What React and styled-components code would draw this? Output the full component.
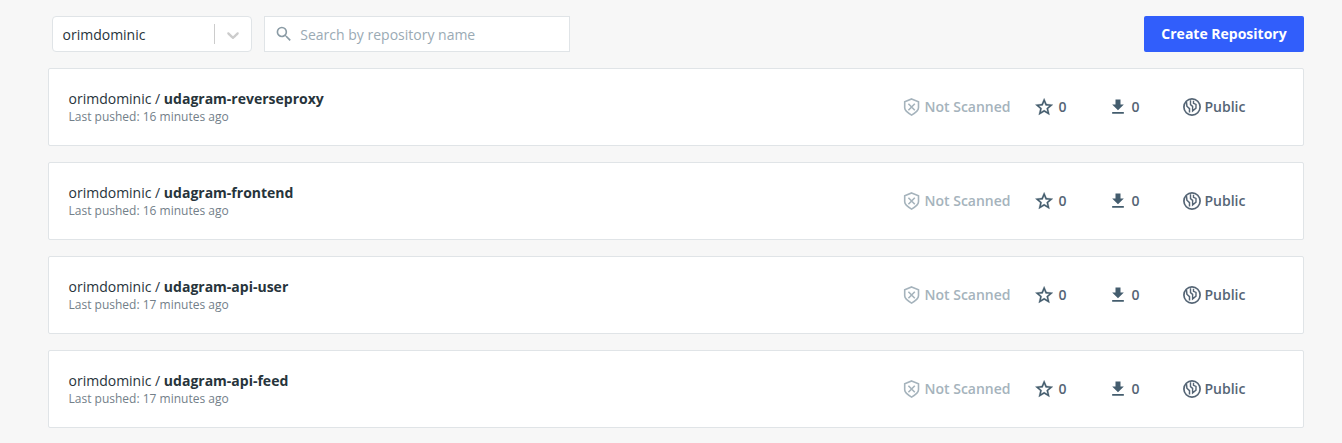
import React from "react";
import styled, { createGlobalStyle } from "styled-components";

const GlobalStyle = createGlobalStyle`
  *, *::before, *::after { box-sizing: border-box; }
  body {
    margin: 0;
    background: #f7f7f7;
    color: #27343b;
    font: 14px/20px "Open Sans", "Noto Sans", sans-serif;
  }
`;

const Page = styled.main`
  padding: 16px 38px 16px 48px;
  height: 443px;
  overflow: hidden;
`;

const Toolbar = styled.div`
  display: flex;
  width: 1256px;
  height: 36px;
  margin-bottom: 16px;
  padding-left: 4px;
`;

const AccountSelect = styled.div`
  display: flex;
  align-items: center;
  width: 200px;
  margin-right: 12px;
  padding-left: 9.5px;
  background: #fff;
  border: 1px solid #e0e4e7;
  border-radius: 4px;
`;

const SelectValue = styled.span`
  flex: 1;
  padding-top: 1px;
`;

const Separator = styled.span`
  width: 1px;
  height: 20px;
  background: #cccccc;
`;

const Chevron = styled.svg`
  width: 20px;
  height: 20px;
  margin: 2px 8px 0;
  fill: #cccccc;
`;

const SearchBox = styled.label`
  display: flex;
  align-items: center;
  width: 306px;
  padding-left: 9px;
  background: #fff;
  border: 1px solid #e0e4e7;
`;

const SearchIcon = styled.svg`
  width: 20px;
  height: 20px;
  flex: none;
  margin-right: 6.3px;
  fill: #8a9ba5;
`;

const SearchInput = styled.input`
  flex: 1;
  min-width: 0;
  height: 20px;
  padding: 1px 0 0;
  border: 0;
  outline: 0;
  background: transparent;
  font: inherit;
  color: #27343b;
  &::placeholder { color: #9aaab4; opacity: 1; }
`;

const CreateButton = styled.button`
  width: 160px;
  height: 36px;
  margin-left: auto;
  padding: 0;
  border: 0;
  border-radius: 2px;
  background: #315efb;
  color: #fff;
  font: 700 14px/20px "Open Sans", "Noto Sans", sans-serif;
`;

const RepositoryList = styled.div`
  display: flex;
  flex-direction: column;
  gap: 16px;
  width: 1256px;
`;

const RepositoryCard = styled.article`
  display: flex;
  align-items: center;
  height: 78px;
  padding-left: 19.5px;
  background: #fff;
  border: 1px solid #e0e4e7;
  border-radius: 2px;
`;

const RepositoryInfo = styled.div`
  width: 834px;
`;

const RepositoryName = styled.div`
  line-height: 20px;
  strong { font-weight: 700; }
`;

const LastPushed = styled.div`
  font-size: 12px;
  line-height: 16px;
  color: #738089;
`;

const Stat = styled.div`
  display: flex;
  align-items: center;
  width: ${({ $width }) => $width}px;
  gap: ${({ $gap }) => $gap}px;
  font-weight: 600;
  white-space: nowrap;
  color: ${({ $muted }) => ($muted ? "#a5b3bc" : "#556575")};
`;

const StatIcon = styled.svg`
  flex: none;
  width: ${({ $size }) => $size}px;
  height: ${({ $size }) => $size}px;
  fill: ${({ $line }) => ($line ? "none" : "#445d6e")};
  stroke: ${({ $line }) => ($line ? "currentColor" : "none")};
`;

const StarIcon = styled(StatIcon)`
  stroke: #445d6e;
  stroke-width: 0.3;
`;

const repositories = [
  { name: "udagram-reverseproxy", age: 16 },
  { name: "udagram-frontend", age: 16 },
  { name: "udagram-api-user", age: 17 },
  { name: "udagram-api-feed", age: 17 },
];

function Repository({ name, age }) {
  return (
    <RepositoryCard>
      <RepositoryInfo>
        <RepositoryName>orimdominic / <strong>{name}</strong></RepositoryName>
        <LastPushed>Last pushed: {age} minutes ago</LastPushed>
      </RepositoryInfo>
      <Stat $width={131} $gap={4} $muted>
        <StatIcon $size={18} $line viewBox="0.4 0 18 18" strokeWidth="1.6">
          <path d="M9 0.9 15.9 3.8V9.8C15.9 13 13 14.8 9 17.1 5 14.8 2.1 13 2.1 9.8V3.8Z" />
          <path d="m5.8 5.8 6.4 6.4m0-6.4-6.4 6.4" />
        </StatIcon>
        Not Scanned
      </Stat>
      <Stat $width={74.5} $gap={4}>
        <StarIcon $size={21} viewBox="0.4 0.5 24 24">
          <path d="m22 9.24-7.19-.62L12 2 9.19 8.63 2 9.24l5.46 4.73L5.82 21 12 17.27 18.18 21l-1.63-7.03L22 9.24zM12 15.4l-3.76 2.27 1-4.28-3.32-2.88 4.38-.38L12 6.1l1.71 4.04 4.38.38-3.32 2.88 1 4.28L12 15.4z" />
        </StarIcon>
        0
      </Stat>
      <Stat $width={73.5} $gap={3.5}>
        <StatIcon $size={20} viewBox="0 0 24 24">
          <path d="M19 9h-4V3H9v6H5l7 7 7-7zM5 18v2h14v-2H5z" />
        </StatIcon>
        0
      </Stat>
      <Stat $width={90} $gap={3}>
        <StatIcon $size={20} $line viewBox="0 0 20 20" strokeWidth="1.7">
          <circle cx="10" cy="10" r="8.1" />
          <path d="M4.4 4.6 4.9 9.2 7.5 11.6V15.4" strokeWidth="1.5" />
          <path d="M8.5 3.2V7.6L10.6 9.4V14L14 11.1V7.4L11.5 6.3V3.8" strokeWidth="1.4" />
        </StatIcon>
        Public
      </Stat>
    </RepositoryCard>
  );
}

export default function App() {
  return (
    <>
      <GlobalStyle />
      <Page>
        <Toolbar>
          <AccountSelect>
            <SelectValue>orimdominic</SelectValue>
            <Separator />
            <Chevron viewBox="0 0 20 20">
              <path d="M4.516 7.548c.436-.446 1.043-.481 1.576 0L10 11.295l3.908-3.747c.533-.481 1.141-.446 1.574 0 .436.445.408 1.197 0 1.615-.406.418-4.695 4.502-4.695 4.502a1.095 1.095 0 0 1-1.576 0S4.924 9.581 4.516 9.163s-.436-1.17 0-1.615z" />
            </Chevron>
          </AccountSelect>
          <SearchBox>
            <SearchIcon viewBox="-0.2 -0.3 24.6 24.6">
              <path d="M15.5 14h-.79l-.28-.27A6.47 6.47 0 0 0 16 9.5 6.5 6.5 0 1 0 9.5 16c1.61 0 3.09-.59 4.23-1.57l.27.28v.79l5 4.99L20.49 19l-4.99-5zm-6 0C7.01 14 5 11.99 5 9.5S7.01 5 9.5 5 14 7.01 14 9.5 11.99 14 9.5 14z" />
            </SearchIcon>
            <SearchInput placeholder="Search by repository name" />
          </SearchBox>
          <CreateButton>Create Repository</CreateButton>
        </Toolbar>
        <RepositoryList>
          {repositories.map((repository) => (
            <Repository key={repository.name} {...repository} />
          ))}
        </RepositoryList>
      </Page>
    </>
  );
}
